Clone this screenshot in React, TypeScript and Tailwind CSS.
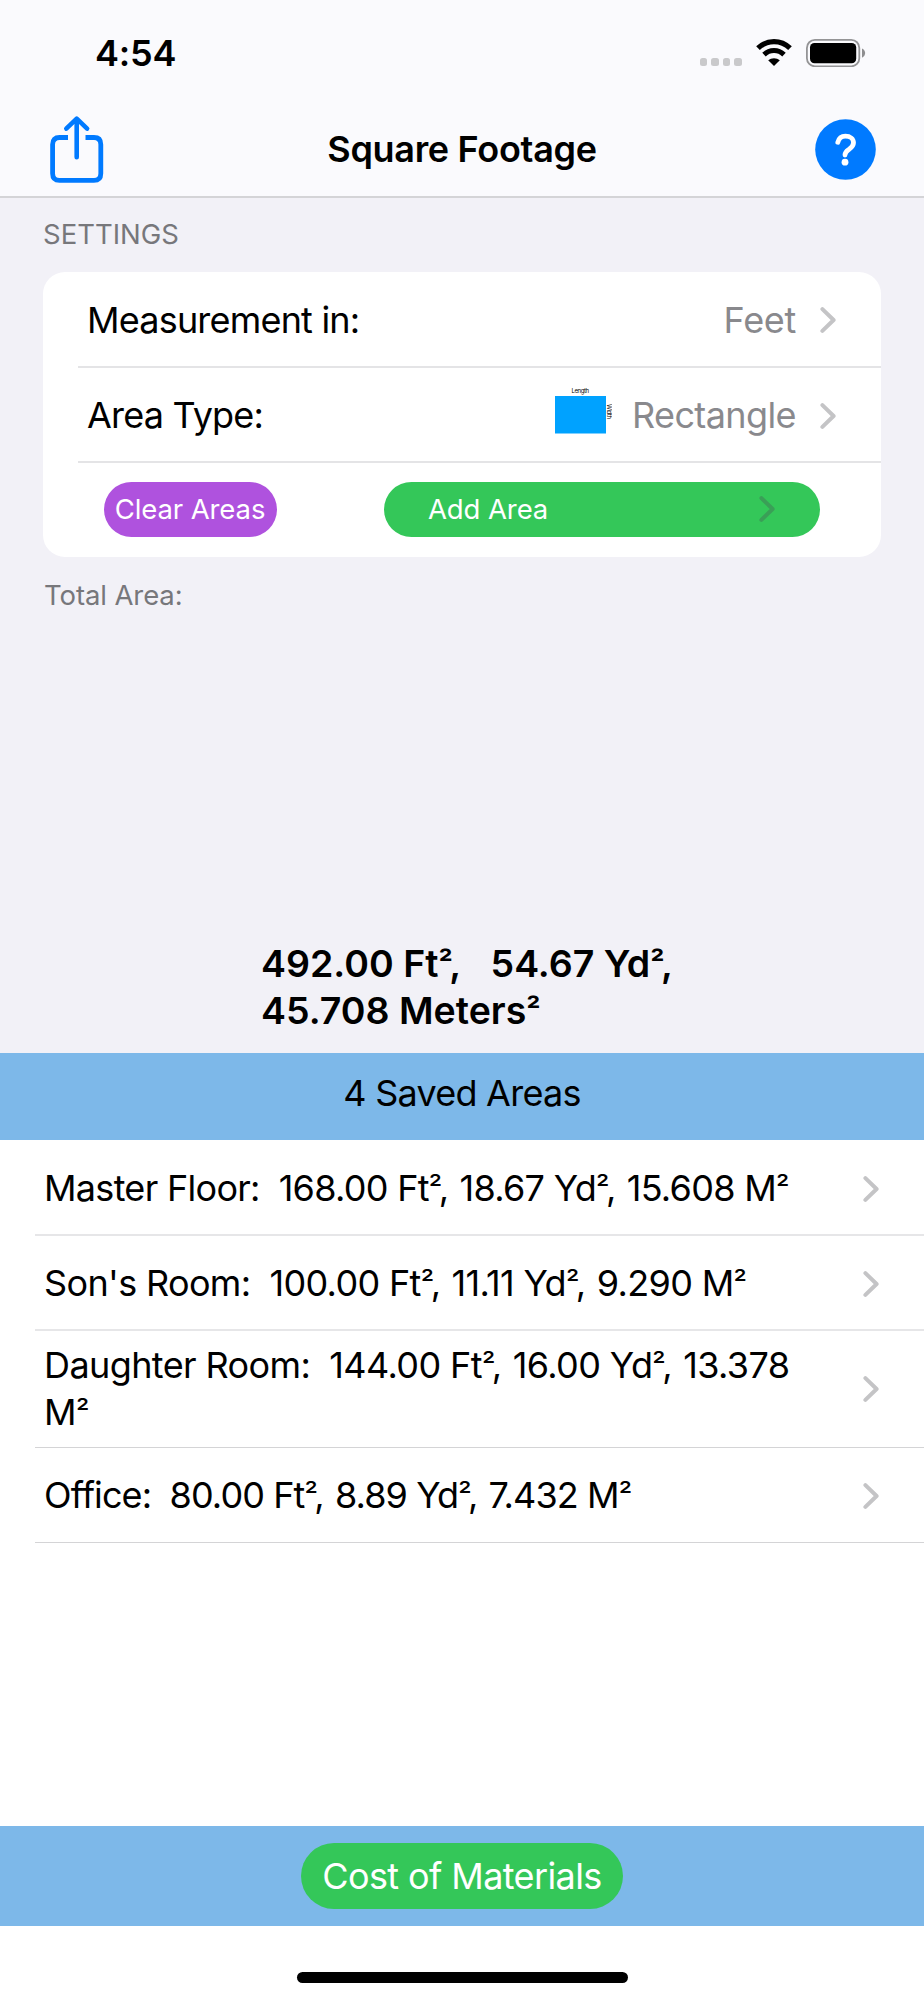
import type { ReactNode } from "react";

const savedAreas = [
  {
    name: "Master Floor:",
    values: "168.00 Ft², 18.67 Yd², 15.608",
    row: "h-[96px] border-b-2 border-[#e6e6e8] pt-[3px]",
    tracking: "tracking-[-0.7px]",
  },
  {
    name: "Son's Room:",
    values: "100.00 Ft², 11.11 Yd², 9.290",
    row: "h-[95px] border-b-2 border-[#e6e6e8] pt-[2px]",
    tracking: "tracking-[-0.65px]",
  },
  {
    name: "Daughter Room:",
    values: "144.00 Ft², 16.00 Yd², 13.378",
    row: "h-[117px] border-b border-[#d4d4d6]",
    tracking: "tracking-[-0.6px]",
  },
  {
    name: "Office:",
    values: "80.00 Ft², 8.89 Yd², 7.432",
    row: "h-[95px] border-b border-[#d4d4d6] pt-px",
    tracking: "tracking-[-0.9px]",
  },
];

const Squared = ({ className = "" }: { className?: string }) => (
  <span className={`align-[2px] text-[0.84em] leading-none ${className}`}>²</span>
);

// Tucks the comma in close to the superscript two
const Units = ({ children }: { children: string }) => (
  <>
    {children.split("²,").map((part, i) => (
      <span key={i}>
        {i > 0 && (
          <>
            <Squared className="tracking-[-3.5px]" />
            <span className="tracking-[1px]">,</span>
          </>
        )}
        {part}
      </span>
    ))}
  </>
);

const Chevron = ({ className = "text-[#c4c4c6]" }: { className?: string }) => (
  <svg width="16" height="28" viewBox="0 0 16 28" fill="none" className={`shrink-0 ${className}`}>
    <path d="M2.4 3.1 L13.6 14 L2.4 24.9" stroke="currentColor" strokeWidth="4" strokeLinecap="round" strokeLinejoin="round" />
  </svg>
);

const StatusBar = () => (
  <div className="flex h-[106px] items-center justify-between pl-[95px] pr-[58px]">
    <span className="text-[36px] font-semibold tracking-[-0.2px]">4:54</span>
    <div className="flex items-center">
      <div className="mt-[18px] mr-[14px] flex gap-1">
        {[0, 1, 2, 3].map((dot) => (
          <span key={dot} className="h-[7.6px] w-[7.6px] rounded-[2.5px] bg-[#c9c9cb]" />
        ))}
      </div>
      <svg width="36" height="28" viewBox="0 0 36 28" className="mr-[14px]" fill="none">
        <path d="M2 9.2 C11 0.4 25 0.4 34 9.2" stroke="#000" strokeWidth="5.2" />
        <path d="M8 15.6 C13.6 10.2 22.4 10.2 28 15.6" stroke="#000" strokeWidth="5" />
        <path d="M12.2 21.3 C15.4 18.4 20.6 18.4 23.8 21.3 L18 27 Z" fill="#000" />
      </svg>
      <svg width="60" height="28" viewBox="0 0 60 28" fill="none">
        <rect x="0.9" y="0.9" width="52.4" height="26.4" rx="8" stroke="#949496" strokeWidth="1.8" />
        <rect x="4" y="4" width="46.2" height="20.2" rx="4.5" fill="#000" />
        <path d="M56 9.5 C60.2 11.4 60.2 16.8 56 18.7 Z" fill="#8e8e90" />
      </svg>
    </div>
  </div>
);

const NavBar = () => (
  <div className="grid h-[90px] grid-cols-[1fr_auto_1fr] items-center px-[48px] pb-[4px]">
    <svg width="58" height="70" viewBox="0 0 58 70" fill="none" stroke="#007aff">
      <path d="M20 23.5 H11.5 Q4.6 23.5 4.6 30.5 V59.5 Q4.6 66.4 11.5 66.4 H46 Q52.8 66.4 52.8 59.5 V30.5 Q52.8 23.5 46 23.5 H37.5" strokeWidth="4.8" />
      <path d="M28.7 43.3 V5.5 M18.3 14.6 L28.7 4.6 L39.1 14.6" strokeWidth="4.6" strokeLinecap="round" strokeLinejoin="round" />
    </svg>
    <h1 className="text-[36px] font-semibold tracking-[-0.3px]">Square Footage</h1>
    <svg width="61" height="61" viewBox="0 0 61 61" fill="none" className="justify-self-end">
      <circle cx="30.5" cy="30.5" r="30.3" fill="#007aff" />
      <path d="M22.8 23.3 C24 18.7 27 17.2 30.4 17.2 C35.2 17.2 38.5 19.8 38.5 23.8 C38.5 27.5 36 29 33.5 30.7 C31 32.4 30 33.6 30 36.1" stroke="#fff" strokeWidth="4.8" strokeLinecap="round" />
      <circle cx="30" cy="43.2" r="3.4" fill="#fff" />
    </svg>
  </div>
);

const SettingsRow = ({ label, className, children }: { label: string; className: string; children: ReactNode }) => (
  <div className={`ml-[35px] flex items-center border-b-2 border-[#e4e4e6] pt-[2px] pl-[9px] pr-[45px] ${className}`}>
    <span className="flex-1 tracking-[-0.8px]">{label}</span>
    {children}
    <Chevron />
  </div>
);

const RectangleIcon = () => (
  <svg width="58" height="48" viewBox="0 0 58 48" className="mr-[20px] mb-[10px]">
    <rect x="1" y="9" width="51" height="37.5" fill="#00a2ff" />
    <text x="17.5" y="6.4" fontSize="6" textLength="17.5">Length</text>
    <text transform="translate(53 17) rotate(90)" fontSize="6" textLength="15">Width</text>
  </svg>
);

const App = () => {
  return (
    <main className="flex h-[2000px] w-[924px] flex-col bg-white font-['Inter',sans-serif] text-[36px] leading-[47px] text-black">
      <header className="border-b-2 border-[#d4d4d7] bg-[#fafafd]">
        <StatusBar />
        <NavBar />
      </header>

      <section className="flex h-[855px] flex-col bg-[#f2f1f7] px-[43px]">
        <h2 className="flex h-[74px] items-center pb-[2px] text-[27.5px] text-[#77777b]">SETTINGS</h2>
        <div className="h-[285px] rounded-[22px] bg-white">
          <SettingsRow label="Measurement in:" className="h-[96px]">
            <span className="mr-[24px] tracking-[-0.3px] text-[#89898d]">Feet</span>
          </SettingsRow>
          <SettingsRow label="Area Type:" className="h-[95px]">
            <RectangleIcon />
            <span className="mr-[24px] tracking-[-0.6px] text-[#89898d]">Rectangle</span>
          </SettingsRow>
          <div className="flex h-[92px] items-center justify-between pl-[60.5px] pr-[61px] text-[27.5px] tracking-[-0.1px] text-white">
            <button className="h-[55px] w-[173px] rounded-full bg-[#af52de]">Clear Areas</button>
            <button className="flex h-[55px] w-[436px] items-center justify-between rounded-full bg-[#34c759] pl-[44px] pr-[45px]">
              Add Area
              <Chevron className="text-[#3a9f57]" />
            </button>
          </div>
        </div>
        <p className="mt-[15px] pl-px text-[27.5px] tracking-[-0.1px] text-[#77777b]">Total Area:</p>
        <p className="mt-auto mb-[19px] ml-[218px] text-[37.5px] leading-[47px] font-semibold whitespace-nowrap">
          <Units>{"492.00 Ft²,\u00a0\u00a0 54.67 Yd²,"}</Units>
          <br />
          45.708 Meters
          <Squared />
        </p>
      </section>

      <h2 className="flex h-[87px] items-center justify-center bg-[#7db8e9] pb-[7px] tracking-[-0.75px]">4 Saved Areas</h2>

      <ul>
        {savedAreas.map((area) => (
          <li key={area.name} className={`ml-[35px] flex items-center justify-between pl-[9px] pr-[45px] ${area.row}`}>
            <span className={`w-[755px] ${area.tracking}`}>
              {area.name}&nbsp; <Units>{area.values}</Units>{" "}
              <span className="whitespace-nowrap">
                M<Squared />
              </span>
            </span>
            <Chevron />
          </li>
        ))}
      </ul>

      <footer className="mt-auto">
        <div className="flex h-[100px] items-center justify-center bg-[#7db8e9]">
          <button className="h-[66px] w-[322px] rounded-full bg-[#34c759] tracking-[-0.6px] text-white">Cost of Materials</button>
        </div>
        <div className="flex h-[74px] items-end justify-center pb-[17.5px]">
          <div className="h-[11px] w-[331px] rounded-full bg-black" />
        </div>
      </footer>
    </main>
  );
};

export default App;
